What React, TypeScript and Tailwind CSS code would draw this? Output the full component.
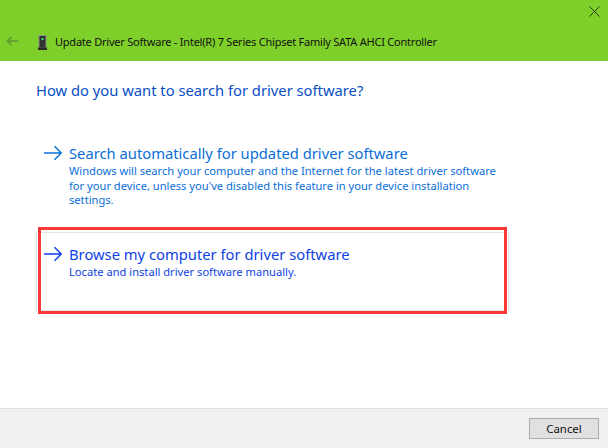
const font = { fontFamily: '"Noto Sans", sans-serif' };

function Arrow({ color }: { color: string }) {
  return (
    <svg width="18" height="16" viewBox="0 0 18 16" fill="none" stroke={color} strokeWidth="1.45">
      <path d="M0 8H17M10.5 1.2L17.2 8L10.5 14.8" />
    </svg>
  );
}

function Option({ title, lines, color }: { title: string; lines: string[]; color: string }) {
  return (
    <div className="flex items-start" style={{ color }}>
      <div className="w-[26px] pt-[2px] pl-[1px] shrink-0">
        <Arrow color={color} />
      </div>
      <div>
        <div className="text-[14.75px] leading-[20px] whitespace-nowrap">{title}</div>
        <div className="mt-[1px]">
          {lines.map((l) => (
            <div key={l} className="text-[11.15px] leading-[14.6px] whitespace-nowrap">{l}</div>
          ))}
        </div>
      </div>
    </div>
  );
}

export default function App() {
  return (
    <div className="w-[608px] h-[448px] flex flex-col bg-white overflow-hidden" style={font}>
      <div className="h-[61px] bg-[#7fcf2b] flex flex-col shrink-0">
        <div className="h-[31px] flex justify-end pr-[8px] pt-[6px]">
          <svg width="11" height="11" viewBox="0 0 11 11" stroke="#1a2a10" strokeWidth="0.9" fill="none">
            <path d="M0.5 0.5L10.5 10.5M10.5 0.5L0.5 10.5" />
          </svg>
        </div>
        <div className="flex items-center h-[22px] pl-[6px]">
          <svg width="12" height="10" viewBox="0 0 12 10" fill="none" stroke="#64a334" strokeWidth="2" className="mr-[20px] -mt-[2px]">
            <path d="M12 5H1.4M5.4 1L1.4 5L5.4 9" />
          </svg>
          <svg width="9" height="15" viewBox="0 0 9 15" className="mr-[8px]">
            <rect x="0.5" y="0" width="8" height="13" fill="#8e938e" />
            <rect x="1.5" y="1" width="6" height="11.5" fill="#2f332f" />
            <rect x="3.5" y="3" width="2" height="2" fill="#3fe07a" />
            <rect x="0" y="12.5" width="9" height="2.5" fill="#2b2b2b" />
          </svg>
          <span className="text-[11px] tracking-[-0.225px] text-[#111] whitespace-nowrap">Update Driver Software - Intel(R) 7 Series Chipset Family SATA AHCI Controller</span>
        </div>
      </div>
      <div className="flex-1 flex flex-col pl-[36px]">
        <div className="pt-[19px] text-[14.75px] leading-[20px] text-[#0a4fc4] whitespace-nowrap">How do you want to search for driver software?</div>
        <div className="mt-[43px] pl-[7px]">
          <Option
            title="Search automatically for updated driver software"
            lines={[
              "Windows will search your computer and the Internet for the latest driver software",
              "for your device, unless you've disabled this feature in your device installation",
              "settings.",
            ]}
            color="#0a6ed8"
          />
        </div>
        <div className="relative mt-[24px] w-[473px] h-[79px] border border-[#e3e3e3] pl-[6px] pt-[11px]">
          <Option
            title="Browse my computer for driver software"
            lines={["Locate and install driver software manually."]}
            color="#0f3fe6"
          />
          <div className="absolute left-[1px] right-[1px] -top-[6px] -bottom-[4px] border-[3px] border-[#fb3737]" />
        </div>
      </div>
      <div className="h-[40px] bg-[#f0f0f0] border-t border-[#dfdfdf] flex items-start justify-end pt-[9px] pr-[9px] shrink-0">
        <div className="w-[70px] h-[21px] bg-[#e1e1e1] border border-[#adadad] flex items-center justify-center text-[11.4px] text-[#111]">Cancel</div>
      </div>
    </div>
  );
}
